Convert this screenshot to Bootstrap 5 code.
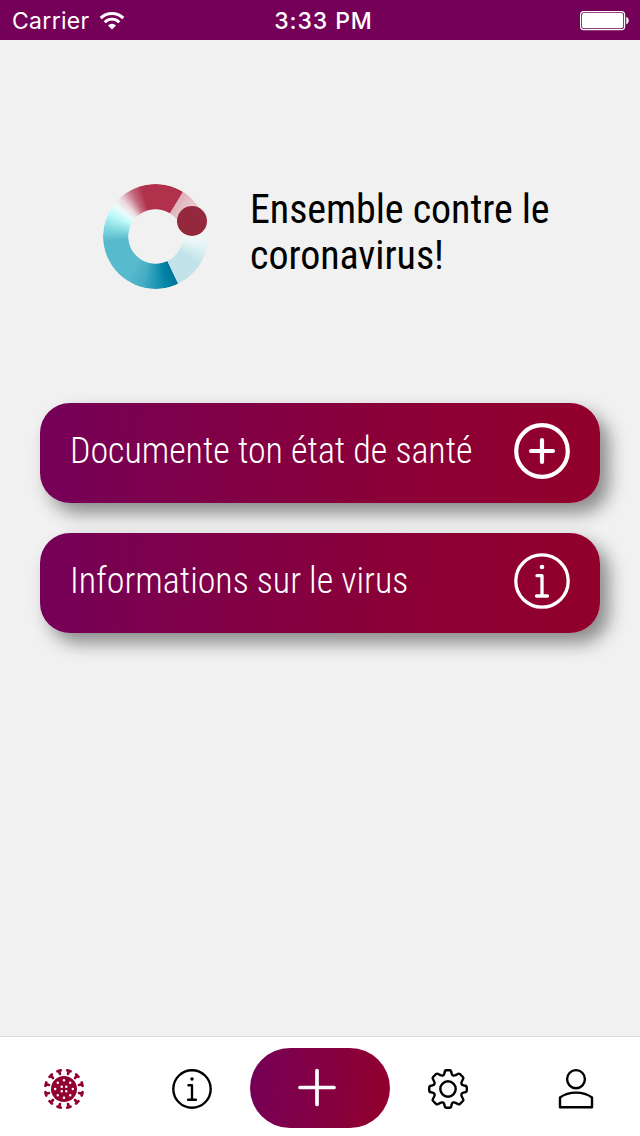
<!DOCTYPE html>
<html lang="fr">
<head>
<meta charset="utf-8">
<meta name="viewport" content="width=device-width, initial-scale=1">
<title>Ensemble contre le coronavirus!</title>
<link href="https://cdn.jsdelivr.net/npm/bootstrap@5.3.0/dist/css/bootstrap.min.css" rel="stylesheet">
<style>
  body { background: #f1f1f1; color: #000; font-family: "Roboto Condensed", Roboto, sans-serif; font-stretch: 75%; overflow: hidden; }
  svg { display: block; flex: none; }
  .status { height: 40px; background: #750058; color: #fff; font: 400 23px/40px Inter, sans-serif; padding: 1px 10px 0 12px; }
  .status > div { flex: 1 1 0; }
  .carrier { letter-spacing: .3px; margin-right: 1px; }
  .clock { font-weight: 500; letter-spacing: .9px; margin-left: 5px; }
  .hero { padding: 143px 0 0 102px; height: 363px; }
  .ring { width: 106px; height: 106px; margin-right: 42px; padding: 1px 0 0 1px; }
  .ring-band { width: 105px; height: 105px; border-radius: 50%;
    background: conic-gradient(#b1304b 0deg 31deg, #dfb0bb 32deg, #ecd0d6 55deg, #f3f6f6 88deg, #e4f4f5 102deg, #c1e3e9 122deg, #c1e3e9 154deg, #00759a 155deg, #0083a5 166deg, #45adc4 195deg, #58bacd 215deg, #58bacd 265deg, #85d8e0 280deg, #bdf8f8 296deg, #eefafa 308deg, #ecd9dd 318deg, #c46a7e 332deg, #b1304b 345deg);
    -webkit-mask: radial-gradient(circle, transparent 26.8px, #000 27.6px);
    mask: radial-gradient(circle, transparent 26.8px, #000 27.6px); }
  .ring-dot { width: 30px; height: 30px; border-radius: 50%; background: #94293e; right: 1px; top: 23px; }
  .title { font-size: 40px; line-height: 46px; font-weight: 400; padding-top: 4px; letter-spacing: -.06px; }
  .action { height: 100px; border: 0; border-radius: 30px; padding: 0 30px 4px; color: #fff; font-size: 36px; font-weight: 300; line-height: 42px;
    background: linear-gradient(95deg, #750058, #8b0036 65%, #92002c); box-shadow: 9px 10px 18px rgba(0,0,0,.43); letter-spacing: -.03px; }
  .actions { gap: 30px; padding: 0 40px; }
  .tabs { height: 100px; background: #fff; border-top: 1px solid #dcdcdc; }
  .tabs a { flex: 1 1 0; height: 103px; color: #000; }
  .add { width: 140px; height: 80px; border-radius: 40px; background: linear-gradient(95deg, #750058, #92002c); margin: -2px -6px 0; flex: none; }
</style>
</head>
<body class="vh-100 d-flex flex-column">
<header class="status d-flex align-items-center">
  <div class="d-flex align-items-center gap-2"><span class="carrier">Carrier</span>
    <svg width="26" height="20" viewBox="0 0 26 20" fill="none" stroke="#fff" stroke-width="2.9"><path d="M1.7 7.1a16 16 0 0 1 22.6 0M5.7 11.2a10.3 10.3 0 0 1 14.6 0"/><path d="M9 14.4a5.7 5.7 0 0 1 8 0l-4 4z" fill="#fff" stroke="none"/></svg>
  </div>
  <span class="clock">3:33 PM</span>
  <div class="d-flex justify-content-end">
    <svg width="50" height="20" viewBox="0 0 50 20"><rect x=".6" y=".6" width="44" height="18" rx="3.2" fill="none" stroke="#fff" stroke-width="1.2"/><rect x="2" y="2" width="41.2" height="15.2" rx="2" fill="#fff"/><path d="M46.3 6c3.2.8 3.2 6.4 0 7.2z" fill="#fff"/></svg>
  </div>
</header>
<main class="flex-grow-1">
  <section class="hero d-flex align-items-start">
    <div class="ring position-relative"><div class="ring-band"></div><div class="ring-dot position-absolute"></div></div>
    <h1 class="title m-0">Ensemble contre le<br>coronavirus!</h1>
  </section>
  <section class="actions d-flex flex-column">
    <button class="action d-flex justify-content-between align-items-center"><span>Documente ton état de santé</span>
      <svg width="56" height="56" viewBox="0 0 56 56" fill="none" stroke="#fff" stroke-width="4.2" stroke-linecap="round"><circle cx="28" cy="28" r="25.8"/><path d="M28 17v22M17 28h22"/></svg></button>
    <button class="action d-flex justify-content-between align-items-center"><span>Informations sur le virus</span>
      <svg width="56" height="56" viewBox="0 0 56 56" fill="none" stroke="#fff" stroke-width="3.3" stroke-linecap="round" stroke-linejoin="round"><circle cx="28" cy="28" r="26.2"/><path d="M23 22.7h5V43M22.5 43h11"/><circle cx="28" cy="14" r="2.3" fill="#fff" stroke="none"/></svg></button>
  </section>
</main>
<nav class="tabs d-flex align-items-start">
  <a href="#" class="d-flex align-items-center justify-content-center" aria-label="Virus">
    <svg width="42" height="42" viewBox="-21 -21 42 42"><defs><g id="spike" stroke="#92002f" stroke-width="2.7" stroke-linecap="round" fill="none"><path d="M0-15.6V-18M-1.7-18.8H1.7"/></g></defs>
      <circle r="13" fill="#92002f"/>
      <g transform="rotate(15)"><use href="#spike"/><use href="#spike" transform="rotate(30)"/><use href="#spike" transform="rotate(60)"/><use href="#spike" transform="rotate(90)"/><use href="#spike" transform="rotate(120)"/><use href="#spike" transform="rotate(150)"/><use href="#spike" transform="rotate(180)"/><use href="#spike" transform="rotate(210)"/><use href="#spike" transform="rotate(240)"/><use href="#spike" transform="rotate(270)"/><use href="#spike" transform="rotate(300)"/><use href="#spike" transform="rotate(330)"/></g>
      <path d="M-2.3-2.3h0M2.3-2.3h0M-2.3 2.3h0M2.3 2.3h0M0-8.8h0M0 8.8h0M-8.8 0h0M8.8 0h0M-6.2-6.2h0M6.2-6.2h0M-6.2 6.2h0M6.2 6.2h0" stroke="#fff" stroke-width="2.5" stroke-linecap="round"/></svg></a>
  <a href="#" class="d-flex align-items-center justify-content-center" aria-label="Informations">
    <svg width="40" height="40" viewBox="0 0 56 56" fill="none" stroke="#000" stroke-width="3.3" stroke-linecap="round" stroke-linejoin="round"><circle cx="28" cy="28" r="26.2"/><path d="M23 22.7h5V43M22.5 43h11"/><circle cx="28" cy="14" r="2.4" fill="#000" stroke="none"/></svg></a>
  <a href="#" class="d-flex align-items-center justify-content-center" aria-label="Ajouter">
    <span class="add d-flex align-items-center justify-content-center"><svg width="44" height="40" viewBox="0 0 44 40" stroke="#fff" stroke-width="3.7" stroke-linecap="round"><path d="M19 2.5v34M2 19.5h34"/></svg></span></a>
  <a href="#" class="d-flex align-items-center justify-content-center" aria-label="Réglages">
    <svg width="42" height="42" viewBox="-21 -21 42 42" fill="none" stroke="#000" stroke-width="2.4" stroke-linecap="round" stroke-linejoin="round"><defs><path id="teeth" d="M-3-18Q-2.6-18.8-1.6-18.8H1.6Q2.6-18.8 3-18L3.7-15.4C4.2-13.4 6-12.8 7.7-13.9L10.2-15.2Q11.2-15.7 12-14.9L14.9-12Q15.7-11.2 15.2-10.2L13.9-7.7C12.8-6 13.4-4.2 15.4-3.7L18-3"/></defs><use href="#teeth"/><use href="#teeth" transform="rotate(90)"/><use href="#teeth" transform="rotate(180)"/><use href="#teeth" transform="rotate(270)"/><circle r="7.7"/></svg></a>
  <a href="#" class="d-flex align-items-center justify-content-center" aria-label="Profil">
    <svg width="36" height="42" viewBox="0 0 36 42" fill="none" stroke="#000" stroke-width="2.4" stroke-linejoin="round"><ellipse cx="18" cy="11.2" rx="8.9" ry="9.1"/><path d="M2 39.2V29.5Q8.5 24.6 18 24.6T34 29.5v9.7z"/></svg></a>
</nav>
<script src="https://cdn.jsdelivr.net/npm/bootstrap@5.3.0/dist/js/bootstrap.bundle.min.js"></script>
</body>
</html>
